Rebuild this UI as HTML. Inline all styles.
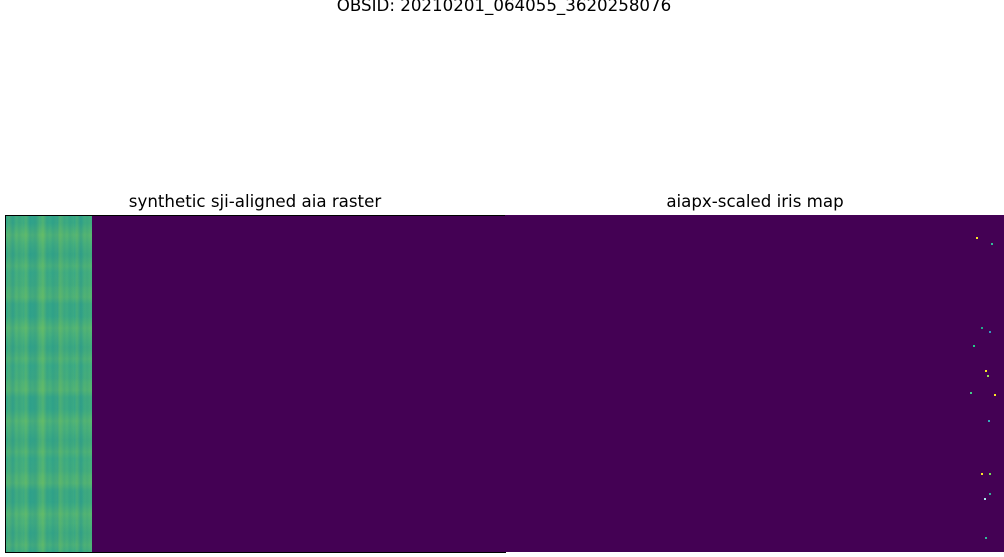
<!DOCTYPE html>
<html><head><style>
html,body{margin:0;padding:0;background:#fff;width:1004px;height:557px;overflow:hidden;font-family:"DejaVu Sans","Liberation Sans",sans-serif;}
.t{position:absolute;font-size:16.67px;color:#000;white-space:nowrap;transform:translateX(-50%);line-height:18px;}
#ax1{position:absolute;left:5px;top:215px;width:499px;height:336px;border:1px solid #000;background:#440154;}
#green{position:absolute;left:0;top:0;width:86px;height:336px;
background:
repeating-linear-gradient(90deg,rgba(150,210,60,0.0) 0px,rgba(150,210,60,0.2) 3px,rgba(30,140,140,0.2) 7px,rgba(60,180,110,0.05) 10px,rgba(40,150,130,0.25) 13px,rgba(120,200,80,0.1) 17px),
repeating-linear-gradient(90deg,rgba(40,140,140,0.0) 0px,rgba(40,140,140,0.2) 5px,rgba(160,215,60,0.15) 11px,rgba(40,140,140,0) 23px),
repeating-linear-gradient(0deg,rgba(180,220,50,0.0) 0px,rgba(180,220,50,0.15) 7px,rgba(30,150,140,0.15) 19px,rgba(80,190,100,0.0) 31px),
repeating-linear-gradient(0deg,rgba(30,140,140,0.0) 0px,rgba(30,140,140,0.12) 13px,rgba(170,215,60,0.12) 29px,rgba(30,140,140,0) 47px),
#35a88a;}
#ax2{position:absolute;left:505px;top:215px;width:499px;height:337px;background:#440154;}
.d{position:absolute;width:2px;height:2px;}
</style></head><body>
<div class="t" style="left:504px;top:-3px;">OBSID: 20210201_064055_3620258076</div>
<div class="t" style="left:255px;top:193px;">synthetic sji-aligned aia raster</div>
<div class="t" style="left:755px;top:193px;">aiapx-scaled iris map</div>
<div id="ax1"><div id="green"></div></div>
<div id="ax2">
<div class="d" style="left:471px;top:22px;background:#fde725"></div>
<div class="d" style="left:486px;top:28px;background:#3b9"></div>
<div class="d" style="left:476px;top:112px;background:#2a8"></div>
<div class="d" style="left:484px;top:116px;background:#39b"></div>
<div class="d" style="left:468px;top:130px;background:#2c8"></div>
<div class="d" style="left:480px;top:155px;background:#fde725"></div>
<div class="d" style="left:482px;top:160px;background:#9d5"></div>
<div class="d" style="left:465px;top:177px;background:#4c8"></div>
<div class="d" style="left:489px;top:179px;background:#fde725"></div>
<div class="d" style="left:483px;top:205px;background:#3ab"></div>
<div class="d" style="left:476px;top:258px;background:#fde725"></div>
<div class="d" style="left:484px;top:258px;background:#7d5"></div>
<div class="d" style="left:479px;top:283px;background:#aee"></div>
<div class="d" style="left:484px;top:278px;background:#3a9"></div>
<div class="d" style="left:480px;top:322px;background:#3b9"></div>
</div>
</body></html>
